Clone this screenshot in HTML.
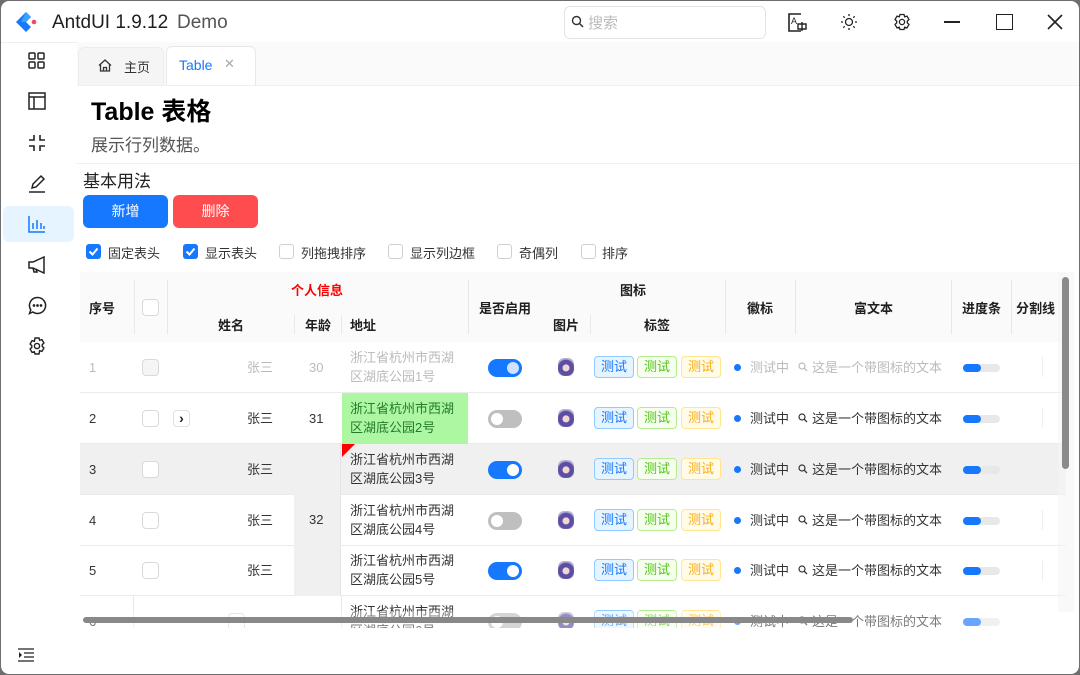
<!DOCTYPE html>
<html><head><meta charset="utf-8">
<style>
*{box-sizing:border-box;margin:0;padding:0}
body{width:1080px;height:675px;overflow:hidden;background:#6e6e6e;font-family:"Liberation Sans","Noto Sans CJK SC",sans-serif;color:#1f1f1f;position:relative}
.win{position:absolute;left:1px;top:1px;width:1078px;height:673px;background:#fff;border-radius:8px;overflow:hidden}
.a{position:absolute}
.t{position:absolute;white-space:nowrap}
.ic{position:absolute}
.hd{font-weight:bold;font-size:13px;color:#1f1f1f}
.vl{position:absolute;width:1px;background:#e8e8e8}
.row{position:absolute;left:79px;width:986px;height:51px;border-bottom:1px solid #ebebeb;font-size:13px;color:#333}
.row .t,.r6 .t{line-height:17px}
.cb{position:absolute;width:17px;height:17px;border:1px solid #d9d9d9;border-radius:4px;background:#fff}
.sw{position:absolute;width:34px;height:18px;border-radius:9px;background:#1677ff}
.sw i{position:absolute;top:3px;width:12px;height:12px;border-radius:50%;background:#fff}
.sw.on i{right:3px}.sw.off{background:#bfbfbf}.sw.off i{left:3px}
.tag{position:absolute;width:40px;height:22px;border:1px solid;border-radius:4px;font-size:13px;text-align:center;line-height:20px}
.tb{border-color:#91caff;background:#e6f4ff;color:#1677ff}
.tg{border-color:#b7eb8f;background:#f6ffed;color:#52c41a}
.ty{border-color:#ffe58f;background:#fffbe6;color:#faad14}
.av{position:absolute;width:16px;height:18px;border-radius:6px;background:radial-gradient(circle at 50% 55%,#f2d6d6 0 25%,#5b4fa3 30% 60%,#b8b3d6 70%)}
.dot{position:absolute;width:7px;height:7px;border-radius:50%;background:#1677ff}
.pg{position:absolute;width:37px;height:8px;border-radius:4px;background:#e8e8e8}
.pg i{position:absolute;left:0;top:0;width:18px;height:8px;border-radius:4px;background:#1677ff}
.ck{position:absolute;width:15px;height:15px;border-radius:3px}
.ck.on{background:#1677ff}
.ck.off{border:1px solid #d0d0d0;background:#fff}
.cl{position:absolute;font-size:13px;color:#333;top:242px}
.mg{position:absolute}
</style></head><body>
<div class="win">
<svg class="ic" style="left:13px;top:9px" width="24" height="24" viewBox="0 0 24 24"><path d="M12 2 L2 12 L12 22 L17 17 L12 12 L17 7 Z" fill="#1677ff"/><path d="M12 2 L17 7 L12 12 L7 12 Z" fill="#3ba0ff"/><circle cx="20" cy="12" r="2.3" fill="#f04864"/></svg>
<div class="t" style="left:51px;top:11px;font-size:19px;color:#1f1f1f">AntdUI 1.9.12</div>
<div class="t" style="left:176px;top:11px;font-size:19px;color:#555">Demo</div>
<div class="a" style="left:563px;top:5px;width:202px;height:33px;border:1px solid #e3e3e3;border-radius:6px"></div>
<svg class="ic" style="left:570px;top:14px" width="13" height="13" viewBox="0 0 13 13"><circle cx="5.5" cy="5.5" r="4" fill="none" stroke="#333" stroke-width="1.4"/><path d="M8.5 8.5 L12 12" stroke="#333" stroke-width="1.5"/></svg>
<div class="t" style="left:587px;top:11px;font-size:15px;color:#bbb">搜索</div>
<svg class="ic" style="left:787px;top:12px" width="20" height="19" viewBox="0 0 20 19"><path d="M13 1H1V18H13" fill="none" stroke="#222" stroke-width="1.6"/><text x="3" y="11" font-size="9" font-family="Liberation Sans" fill="#222">A</text><path d="M10 11h8v5h-8zM14 9v9" fill="none" stroke="#222" stroke-width="1.4"/></svg>
<svg class="ic" style="left:839px;top:12px" width="18" height="18" viewBox="0 0 18 18" stroke="#222" stroke-width="1.3" fill="none"><circle cx="9" cy="9" r="3.5"/><path d="M9 1v2M9 15v2M1 9h2M15 9h2M3.3 3.3l1.4 1.4M13.3 13.3l1.4 1.4M3.3 14.7l1.4-1.4M13.3 4.7l1.4-1.4"/></svg>
<svg class="ic" style="left:892px;top:12px" width="18" height="18" viewBox="0 0 18 18" stroke="#222" stroke-width="1.3" fill="none"><path d="M7 1.5h4l.7 2.3 2.3-.7 2 3.4-1.7 1.7 0 1.6 1.7 1.7-2 3.4-2.3-.7L11 16.5H7l-.7-2.3-2.3.7-2-3.4L3.7 9.8V8.2L2 6.5l2-3.4 2.3.7z"/><circle cx="9" cy="9" r="2.6"/></svg>
<div class="a" style="left:943px;top:20px;width:16px;height:1.5px;background:#222"></div>
<div class="a" style="left:995px;top:13px;width:17px;height:16px;border:1.6px solid #222"></div>
<svg class="ic" style="left:1046px;top:13px" width="16" height="16" viewBox="0 0 16 16"><path d="M1 1L15 15M15 1L1 15" stroke="#222" stroke-width="1.6"/></svg>
<div class="a" style="left:0;top:41px;width:1078px;height:1px;background:#f0f0f0"></div>
<div class="a" style="left:2px;top:205px;width:71px;height:36px;background:#e6f4ff;border-radius:6px"></div>
<svg class="ic" style="left:27px;top:51px" width="18" height="18" viewBox="0 0 18 18" fill="none" stroke="#222" stroke-width="1.5"><rect x="1" y="1" width="6" height="6" rx="1"/><rect x="10" y="1" width="6" height="6" rx="1"/><rect x="1" y="10" width="6" height="6" rx="1"/><rect x="10" y="10" width="6" height="6" rx="1"/></svg>
<svg class="ic" style="left:27px;top:91px" width="18" height="18" viewBox="0 0 18 18" fill="none" stroke="#222" stroke-width="1.5"><rect x="1" y="1" width="16" height="16"/><path d="M1 5h16M6 5v12"/></svg>
<svg class="ic" style="left:27px;top:133px" width="18" height="18" viewBox="0 0 18 18" fill="none" stroke="#222" stroke-width="1.6"><path d="M6 1v5H1M12 1v5h5M6 17v-5H1M12 17v-5h5"/></svg>
<svg class="ic" style="left:27px;top:173px" width="18" height="19" viewBox="0 0 18 19" fill="none" stroke="#222" stroke-width="1.5"><path d="M4 14l1-4 8-8 3 3-8 8z"/><path d="M1 18h16"/></svg>
<svg class="ic" style="left:27px;top:214px" width="18" height="18" viewBox="0 0 18 18" fill="none" stroke="#1677ff" stroke-width="1.5"><path d="M1 1v16h16M5 14V8M9 14V5M13 14V8M16 14v-3"/></svg>
<svg class="ic" style="left:27px;top:255px" width="18" height="18" viewBox="0 0 18 18" fill="none" stroke="#222" stroke-width="1.5"><path d="M1 6h4l11-5v16L5 12H1z"/><path d="M5 12l1 4h3l-1-3"/></svg>
<svg class="ic" style="left:27px;top:295px" width="19" height="19" viewBox="0 0 19 19" fill="none" stroke="#222" stroke-width="1.5"><path d="M9.5 1.5a8 8 0 1 1-4.6 14.5L1.5 17.5l1.3-3.6A8 8 0 0 1 9.5 1.5z"/><circle cx="6" cy="9.5" r=".6" fill="#222"/><circle cx="9.5" cy="9.5" r=".6" fill="#222"/><circle cx="13" cy="9.5" r=".6" fill="#222"/></svg>
<svg class="ic" style="left:27px;top:336px" width="18" height="18" viewBox="0 0 18 18" stroke="#222" stroke-width="1.4" fill="none"><path d="M7 1h4l.6 2.3 2.3-.7 2 3.4-1.7 1.7v1.6l1.7 1.7-2 3.4-2.3-.7L11 17H7l-.6-2.3-2.3.7-2-3.4 1.7-1.7V8.7L2.1 7l2-3.4 2.3.7z"/><circle cx="9" cy="9" r="2.6"/></svg>
<svg class="ic" style="left:17px;top:647px" width="16" height="14" viewBox="0 0 16 14" stroke="#222" stroke-width="1.3" fill="none"><path d="M0 1h16M6 5h10M6 9h10M0 13h16"/><path d="M1 4l3 3-3 3z" fill="#222" stroke="none"/></svg>
<div class="a" style="left:76px;top:41px;width:1002px;height:43px;background:#fafafa"></div>
<div class="a" style="left:77px;top:46px;width:86px;height:38px;background:#f5f5f5;border:1px solid #ececec;border-bottom:none;border-radius:6px 6px 0 0"></div>
<svg class="ic" style="left:97px;top:58px" width="14" height="13" viewBox="0 0 14 13" fill="none" stroke="#333" stroke-width="1.3"><path d="M1 6.5L7 1l6 5.5M2.5 5v7h9V5M5.5 12V8.5h3V12"/></svg>
<div class="t" style="left:123px;top:56px;font-size:13px;color:#333">主页</div>
<div class="a" style="left:165px;top:45px;width:90px;height:40px;background:#fff;border:1px solid #e8e8e8;border-bottom:none;border-radius:6px 6px 0 0"></div>
<div class="t" style="left:178px;top:56px;font-size:14px;color:#1677ff">Table</div>
<div class="t" style="left:223px;top:55px;font-size:13px;color:#aaa">✕</div>
<div class="a" style="left:76px;top:84px;width:1002px;height:1px;background:#f0f0f0"></div>
<div class="t" style="left:90px;top:91px;font-size:25px;font-weight:bold;color:#000">Table 表格</div>
<div class="t" style="left:90px;top:130px;font-size:17px;color:#555">展示行列数据。</div>
<div class="a" style="left:76px;top:162px;width:1002px;height:1px;background:#f0f0f0"></div>
<div class="t" style="left:82px;top:166px;font-size:17px;color:#222">基本用法</div>
<div class="a" style="left:82px;top:194px;width:85px;height:33px;background:#1677ff;border-radius:6px;color:#fff;font-size:14px;text-align:center;line-height:33px">新增</div>
<div class="a" style="left:172px;top:194px;width:85px;height:33px;background:#ff4d4f;border-radius:6px;color:#fff;font-size:14px;text-align:center;line-height:33px">删除</div>
<div class="ck on" style="left:85px;top:243px"><svg width="15" height="15"><path d="M3.5 7.5l3 3 5-6" stroke="#fff" stroke-width="2" fill="none"/></svg></div><div class="cl" style="left:107px">固定表头</div>
<div class="ck on" style="left:182px;top:243px"><svg width="15" height="15"><path d="M3.5 7.5l3 3 5-6" stroke="#fff" stroke-width="2" fill="none"/></svg></div><div class="cl" style="left:204px">显示表头</div>
<div class="ck off" style="left:278px;top:243px"></div><div class="cl" style="left:300px">列拖拽排序</div>
<div class="ck off" style="left:387px;top:243px"></div><div class="cl" style="left:409px">显示列边框</div>
<div class="ck off" style="left:496px;top:243px"></div><div class="cl" style="left:518px">奇偶列</div>
<div class="ck off" style="left:580px;top:243px"></div><div class="cl" style="left:601px">排序</div>
<div class="a" style="left:79px;top:271px;width:986px;height:70px;background:#fafafa"></div>
<div class="vl" style="left:133px;top:279px;height:54px"></div>
<div class="vl" style="left:166px;top:279px;height:54px"></div>
<div class="vl" style="left:293px;top:314px;height:19px"></div>
<div class="vl" style="left:340px;top:314px;height:19px"></div>
<div class="vl" style="left:467px;top:279px;height:54px"></div>
<div class="vl" style="left:589px;top:314px;height:19px"></div>
<div class="vl" style="left:724px;top:279px;height:54px"></div>
<div class="vl" style="left:794px;top:279px;height:54px"></div>
<div class="vl" style="left:950px;top:279px;height:54px"></div>
<div class="vl" style="left:1010px;top:279px;height:54px"></div>
<div class="t hd" style="left:88px;top:297px">序号</div>
<div class="cb" style="left:141px;top:298px"></div>
<div class="t hd" style="left:290px;top:279px;color:#f00">个人信息</div>
<div class="t hd" style="left:217px;top:314px">姓名</div>
<div class="t hd" style="left:304px;top:314px">年龄</div>
<div class="t hd" style="left:349px;top:314px">地址</div>
<div class="t hd" style="left:478px;top:297px">是否启用</div>
<div class="t hd" style="left:619px;top:279px">图标</div>
<div class="t hd" style="left:552px;top:314px">图片</div>
<div class="t hd" style="left:643px;top:314px">标签</div>
<div class="t hd" style="left:746px;top:297px">徽标</div>
<div class="t hd" style="left:853px;top:297px">富文本</div>
<div class="t hd" style="left:961px;top:297px">进度条</div>
<div class="t hd" style="left:1015px;top:297px">分割线</div>

<div class="row" style="top:341px;color:#bbb">
 <div class="t" style="left:9px;top:17px">1</div>
 <div class="cb" style="left:62px;top:17px;background:#f5f5f5"></div>
 <div class="t" style="left:167px;top:17px">张三</div>
 <div class="t" style="left:229px;top:17px">30</div>
 <div class="t" style="left:270px;top:6px;line-height:19px">浙江省杭州市西湖<br>区湖底公园1号</div>
 <div class="sw on" style="left:408px;top:17px"><i style="background:#cfe2ff"></i></div>
 <div class="av" style="left:478px;top:16px"></div>
 <div class="tag tb" style="left:514px;top:14px">测试</div><div class="tag tg" style="left:557px;top:14px">测试</div><div class="tag ty" style="left:601px;top:14px">测试</div>
 <div class="dot" style="left:654px;top:22px"></div><div class="t" style="left:670px;top:17px">测试中</div>
 <svg class="mg" style="left:718px;top:20px" width="10" height="10" viewBox="0 0 10 10"><circle cx="4" cy="4" r="3" fill="none" stroke="#bbb" stroke-width="1.2"/><path d="M6.2 6.2L9 9" stroke="#bbb" stroke-width="1.3"/></svg><div class="t" style="left:732px;top:17px">这是一个带图标的文本</div>
 <div class="pg" style="left:883px;top:22px"><i></i></div>
</div>
<div class="row" style="top:392px">
 <div class="t" style="left:9px;top:17px">2</div>
 <div class="cb" style="left:62px;top:17px"></div>
 <div class="a" style="left:93px;top:17px;width:17px;height:17px;border:1px solid #e0e0e0;border-radius:4px;font-size:14px;font-weight:bold;text-align:center;line-height:14px;color:#222">›</div>
 <div class="t" style="left:167px;top:17px">张三</div>
 <div class="t" style="left:229px;top:17px">31</div>
 <div class="a" style="left:262px;top:0;width:126px;height:51px;background:#adf7a3"></div>
 <div class="t" style="left:270px;top:6px;line-height:19px;color:#237a2a">浙江省杭州市西湖<br>区湖底公园2号</div>
 <div class="sw off" style="left:408px;top:17px"><i></i></div>
 <div class="av" style="left:478px;top:16px"></div>
 <div class="tag tb" style="left:514px;top:14px">测试</div><div class="tag tg" style="left:557px;top:14px">测试</div><div class="tag ty" style="left:601px;top:14px">测试</div>
 <div class="dot" style="left:654px;top:22px"></div><div class="t" style="left:670px;top:17px">测试中</div>
 <svg class="mg" style="left:718px;top:20px" width="10" height="10" viewBox="0 0 10 10"><circle cx="4" cy="4" r="3" fill="none" stroke="#333" stroke-width="1.2"/><path d="M6.2 6.2L9 9" stroke="#333" stroke-width="1.3"/></svg><div class="t" style="left:732px;top:17px">这是一个带图标的文本</div>
 <div class="pg" style="left:883px;top:22px"><i></i></div>
</div>
<div class="row" style="top:443px;background:#f0f0f0">
 <div class="t" style="left:9px;top:17px">3</div>
 <div class="cb" style="left:62px;top:17px"></div>
 <div class="t" style="left:167px;top:17px">张三</div>
 <div class="t" style="left:270px;top:6px;line-height:19px">浙江省杭州市西湖<br>区湖底公园3号</div>
 <div class="sw on" style="left:408px;top:17px"><i></i></div>
 <div class="av" style="left:478px;top:16px"></div>
 <div class="tag tb" style="left:514px;top:14px">测试</div><div class="tag tg" style="left:557px;top:14px">测试</div><div class="tag ty" style="left:601px;top:14px">测试</div>
 <div class="dot" style="left:654px;top:22px"></div><div class="t" style="left:670px;top:17px">测试中</div>
 <svg class="mg" style="left:718px;top:20px" width="10" height="10" viewBox="0 0 10 10"><circle cx="4" cy="4" r="3" fill="none" stroke="#333" stroke-width="1.2"/><path d="M6.2 6.2L9 9" stroke="#333" stroke-width="1.3"/></svg><div class="t" style="left:732px;top:17px">这是一个带图标的文本</div>
 <div class="pg" style="left:883px;top:22px"><i></i></div>
</div>
<div class="row" style="top:494px">
 <div class="t" style="left:9px;top:17px">4</div>
 <div class="cb" style="left:62px;top:17px"></div>
 <div class="t" style="left:167px;top:17px">张三</div>
 <div class="t" style="left:270px;top:6px;line-height:19px">浙江省杭州市西湖<br>区湖底公园4号</div>
 <div class="sw off" style="left:408px;top:17px"><i></i></div>
 <div class="av" style="left:478px;top:16px"></div>
 <div class="tag tb" style="left:514px;top:14px">测试</div><div class="tag tg" style="left:557px;top:14px">测试</div><div class="tag ty" style="left:601px;top:14px">测试</div>
 <div class="dot" style="left:654px;top:22px"></div><div class="t" style="left:670px;top:17px">测试中</div>
 <svg class="mg" style="left:718px;top:20px" width="10" height="10" viewBox="0 0 10 10"><circle cx="4" cy="4" r="3" fill="none" stroke="#333" stroke-width="1.2"/><path d="M6.2 6.2L9 9" stroke="#333" stroke-width="1.3"/></svg><div class="t" style="left:732px;top:17px">这是一个带图标的文本</div>
 <div class="pg" style="left:883px;top:22px"><i></i></div>
</div>
<div class="row" style="top:544px">
 <div class="t" style="left:9px;top:17px">5</div>
 <div class="cb" style="left:62px;top:17px"></div>
 <div class="t" style="left:167px;top:17px">张三</div>
 <div class="t" style="left:270px;top:6px;line-height:19px">浙江省杭州市西湖<br>区湖底公园5号</div>
 <div class="sw on" style="left:408px;top:17px"><i></i></div>
 <div class="av" style="left:478px;top:16px"></div>
 <div class="tag tb" style="left:514px;top:14px">测试</div><div class="tag tg" style="left:557px;top:14px">测试</div><div class="tag ty" style="left:601px;top:14px">测试</div>
 <div class="dot" style="left:654px;top:22px"></div><div class="t" style="left:670px;top:17px">测试中</div>
 <svg class="mg" style="left:718px;top:20px" width="10" height="10" viewBox="0 0 10 10"><circle cx="4" cy="4" r="3" fill="none" stroke="#333" stroke-width="1.2"/><path d="M6.2 6.2L9 9" stroke="#333" stroke-width="1.3"/></svg><div class="t" style="left:732px;top:17px">这是一个带图标的文本</div>
 <div class="pg" style="left:883px;top:22px"><i></i></div>
</div>
<div class="a" style="left:293px;top:443px;width:47px;height:152px;background:#f0f0f0;border-right:1px solid #e4e4e4"></div>
<div class="t" style="left:308px;top:510px;font-size:13px;line-height:17px;color:#333">32</div>
<div class="a" style="left:341px;top:443px;width:0;height:0;border-top:13px solid #f00;border-right:13px solid transparent"></div>
<div class="a r6" style="left:79px;top:595px;width:986px;height:32px;overflow:hidden;font-size:13px;color:#333">
 <div class="vl" style="left:53px;top:0;height:32px"></div>
 <div class="vl" style="left:261px;top:0;height:32px"></div>
 <div class="t" style="left:9px;top:17px">6</div>
 <div class="cb" style="left:148px;top:17px"></div>
 <div class="t" style="left:270px;top:6px;line-height:19px">浙江省杭州市西湖<br>区湖底公园6号</div>
 <div class="sw off" style="left:408px;top:17px"><i></i></div>
 <div class="av" style="left:478px;top:16px"></div>
 <div class="tag tb" style="left:514px;top:14px">测试</div><div class="tag tg" style="left:557px;top:14px">测试</div><div class="tag ty" style="left:601px;top:14px">测试</div>
 <div class="dot" style="left:654px;top:22px"></div><div class="t" style="left:670px;top:17px">测试中</div>
 <svg class="mg" style="left:718px;top:20px" width="10" height="10" viewBox="0 0 10 10"><circle cx="4" cy="4" r="3" fill="none" stroke="#333" stroke-width="1.2"/><path d="M6.2 6.2L9 9" stroke="#333" stroke-width="1.3"/></svg><div class="t" style="left:732px;top:17px">这是一个带图标的文本</div>
 <div class="pg" style="left:883px;top:22px"><i></i></div>
 <div class="a" style="left:0;top:15px;width:986px;height:17px;background:rgba(255,255,255,.35)"></div>
</div>
<div class="vl" style="left:1041px;top:356px;height:20px;background:#eee"></div>
<div class="vl" style="left:1041px;top:407px;height:20px;background:#eee"></div>
<div class="vl" style="left:1041px;top:458px;height:20px;background:#eee"></div>
<div class="vl" style="left:1041px;top:509px;height:20px;background:#eee"></div>
<div class="vl" style="left:1041px;top:560px;height:20px;background:#eee"></div>
<div class="a" style="left:1057px;top:271px;width:16px;height:340px;background:rgba(245,245,245,.6)"></div>
<div class="a" style="left:1061px;top:276px;width:7px;height:192px;border-radius:4px;background:#8a8a8a"></div>
<div class="a" style="left:82px;top:616px;width:770px;height:6px;border-radius:3px;background:#888"></div>
</div>
</body></html>
